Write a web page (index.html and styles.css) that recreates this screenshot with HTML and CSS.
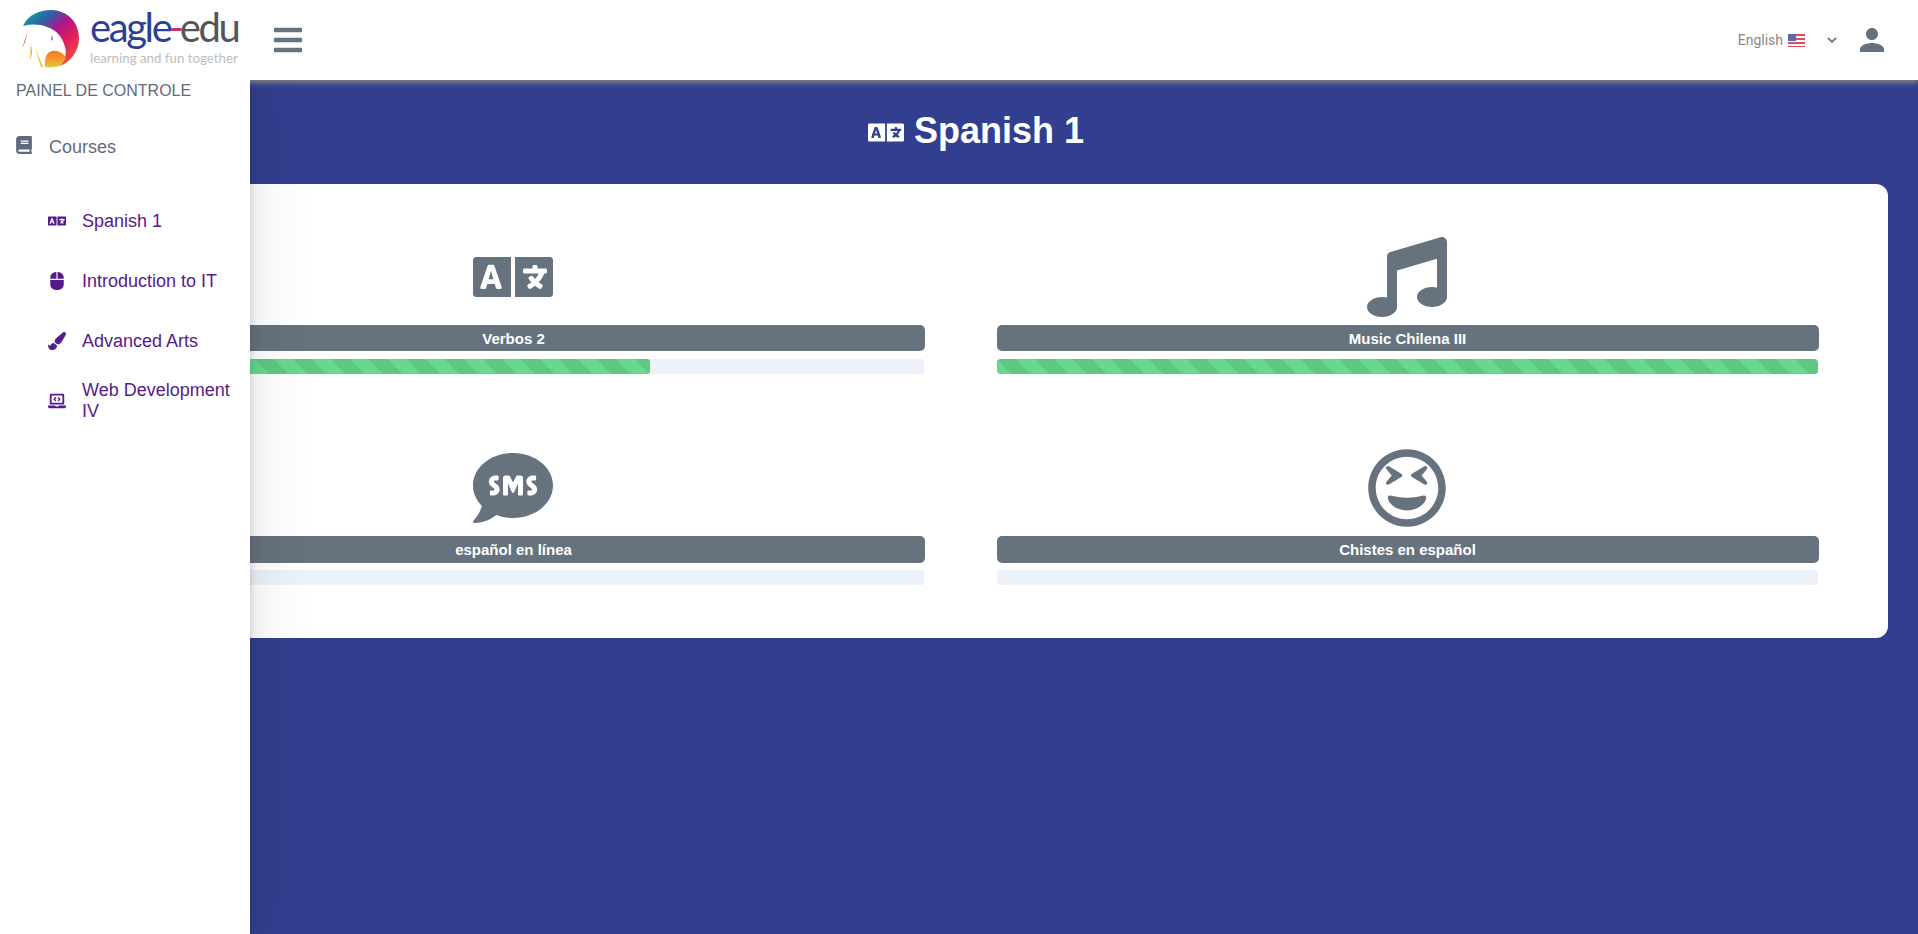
FILE: index.html
```html
<!DOCTYPE html>
<html lang="en">
  <head>
    <meta charset="UTF-8" />
    <title>Spanish 1</title>
    <link rel="stylesheet" href="styles.css">
  </head>
  <body>
    <header class="topbar">
      <div class="logo">
        <svg class="logo-mark" viewBox="20 8 64 64" width="64" height="64">
          <defs>
            <linearGradient id="rainbow" gradientUnits="userSpaceOnUse" x1="30" y1="14" x2="72" y2="62">
              <stop offset="0" stop-color="#0f9aa0" />
              <stop offset="0.22" stop-color="#2f5fa8" />
              <stop offset="0.45" stop-color="#b0158a" />
              <stop offset="0.7" stop-color="#e01f5c" />
              <stop offset="1" stop-color="#f0503a" />
            </linearGradient>
            <linearGradient id="hump" x1="0" y1="0" x2="0" y2="1">
              <stop offset="0" stop-color="#f5761f" />
              <stop offset="0.6" stop-color="#f7a030" />
              <stop offset="1" stop-color="#c9d24a" />
            </linearGradient>
          </defs>
          <path fill="url(#rainbow)" d="M23 26C28 15 39 10 51 10c16 0 28 12 28 28 0 14-9 24-19 28 5-6 7-12 5-19-3-11-9-17-18-20-8-3-16-3-24-1z" />
          <path fill="url(#hump)" d="M45 67c-1-7 1-15 7-16 6-1 12 3 14 7-2 4-4 6-6 8-5 1-10 2-15 1z" />
          <path fill="#e8402c" d="M28 30l-6 19 3-7z" />
          <path fill="#f5a020" d="M31 43l-1 17 2-7z" />
          <path fill="#e8c030" d="M35 47l8 20h-2z" />
          <path fill="#5566c0" d="M52 35l1 6-2-2z" />
        </svg>
        <div class="logo-text">
          <div class="logo-name"><span class="logo-blue">eagle</span><span class="logo-dash">-</span><span class="logo-grey">edu</span></div>
          <div class="logo-tag">learning and fun together</div>
        </div>
      </div>
      <svg class="menu-icon" viewBox="0 0 448 512" width="28" height="32">
        <path d="M16 132h416c8.837 0 16-7.163 16-16V76c0-8.837-7.163-16-16-16H16C7.163 60 0 67.163 0 76v40c0 8.837 7.163 16 16 16zm0 160h416c8.837 0 16-7.163 16-16v-40c0-8.837-7.163-16-16-16H16c-8.837 0-16 7.163-16 16v40c0 8.837 7.163 16 16 16zm0 160h416c8.837 0 16-7.163 16-16v-40c0-8.837-7.163-16-16-16H16c-8.837 0-16 7.163-16 16v40c0 8.837 7.163 16 16 16z" />
      </svg>
      <div class="lang">
        <span>English</span>
        <svg class="flag" viewBox="0 0 17 14" width="17" height="14">
          <rect width="17" height="14" fill="#f4f4f6" />
          <path fill="#d85060" d="M0 1h17v2H0zM0 5h17v2H0zM0 9h17v2H0zM0 13h17v1H0z" />
          <rect width="8" height="7" y="1" fill="#5a6aa8" />
        </svg>
        <svg class="chevron" viewBox="0 0 10 6" width="10" height="6">
          <path d="M1 1l4 4 4-4" />
        </svg>
      </div>
      <svg class="user-icon" viewBox="0 0 24 24" width="36" height="36">
        <path d="M12 12c2.21 0 4-1.79 4-4s-1.79-4-4-4-4 1.79-4 4 1.79 4 4 4zm0 2c-2.67 0-8 1.34-8 4v2h16v-2c0-2.66-5.33-4-8-4z" />
      </svg>
    </header>

    <aside class="sidebar">
      <div class="side-title">PAINEL DE CONTROLE</div>
      <div class="side-section">
        <svg viewBox="0 0 448 512" width="16" height="18">
          <path d="M448 360V24c0-13.3-10.7-24-24-24H96C43 0 0 43 0 96v320c0 53 43 96 96 96h328c13.3 0 24-10.7 24-24v-16c0-7.5-3.5-14.3-8.9-18.7-4.2-15.4-4.2-59.3 0-74.7 5.4-4.3 8.9-11.1 8.9-18.6zM128 134c0-3.3 2.7-6 6-6h212c3.3 0 6 2.7 6 6v20c0 3.3-2.7 6-6 6H134c-3.3 0-6-2.7-6-6v-20zm0 64c0-3.3 2.7-6 6-6h212c3.3 0 6 2.7 6 6v20c0 3.3-2.7 6-6 6H134c-3.3 0-6-2.7-6-6v-20zm253.4 250H96c-17.7 0-32-14.3-32-32 0-17.6 14.4-32 32-32h285.4c-1.9 17.1-1.9 46.9 0 64z" />
        </svg>
        <span>Courses</span>
      </div>
      <ul class="side-list">
        <li>
          <svg viewBox="0 0 640 512" width="18" height="18"><use href="#icon-language" /></svg>
          <span>Spanish 1</span>
        </li>
        <li>
          <svg viewBox="0 0 384 512" width="18" height="18">
            <path d="M0 352a160 160 0 0 0 160 160h64a160 160 0 0 0 160-160V224H0zM176 0h-16A160 160 0 0 0 0 160v32h176zm48 0h-16v192h176v-32A160 160 0 0 0 224 0z" />
          </svg>
          <span>Introduction to IT</span>
        </li>
        <li>
          <svg viewBox="0 0 512 512" width="18" height="18">
            <path d="M167.02 309.34c-40.12 2.58-76.53 17.86-97.19 72.3-2.35 6.21-8 9.98-14.59 9.98-11.11 0-45.46-27.67-55.25-34.35C0 439.62 37.93 512 128 512c75.86 0 128-43.77 128-120.19 0-3.11-.65-6.08-.97-9.13l-88.01-73.34zM457.89 0c-15.16 0-29.37 6.71-40.21 16.45C213.27 199.05 192 203.34 192 257.09c0 13.7 3.25 26.76 8.73 38.7l63.82 53.18c7.21 1.8 14.64 3.03 22.39 3.03 62.11 0 98.11-45.47 211.16-256.46 7.38-14.35 13.9-29.85 13.9-45.99C512 20.64 486 0 457.89 0z" />
          </svg>
          <span>Advanced Arts</span>
        </li>
        <li>
          <svg viewBox="0 0 640 512" width="18" height="18">
            <path d="M255.03 261.65c6.25 6.25 16.38 6.25 22.63 0l11.31-11.31c6.25-6.25 6.25-16.38 0-22.63L253.25 192l35.71-35.72c6.25-6.25 6.25-16.38 0-22.63l-11.31-11.31c-6.25-6.25-16.38-6.25-22.63 0l-58.34 58.34c-6.25 6.25-6.25 16.38 0 22.63l58.35 58.34zm96.01-11.3l11.31 11.31c6.25 6.25 16.38 6.25 22.63 0l58.34-58.34c6.25-6.25 6.25-16.38 0-22.63l-58.34-58.34c-6.25-6.25-16.38-6.25-22.63 0l-11.31 11.31c-6.25 6.25-6.25 16.38 0 22.63L386.75 192l-35.71 35.72c-6.25 6.25-6.25 16.38 0 22.63zM624 416H381.54c-.74 19.81-14.71 32-32.74 32H288c-18.69 0-33.02-17.47-32.77-32H16c-8.8 0-16 7.2-16 16v16c0 35.2 28.8 64 64 64h512c35.2 0 64-28.8 64-64v-16c0-8.8-7.2-16-16-16zM576 48c0-26.4-21.6-48-48-48H112C85.6 0 64 21.6 64 48v336h512V48zm-64 272H128V64h384v256z" />
          </svg>
          <span>Web Development IV</span>
        </li>
      </ul>
    </aside>

    <main class="content">
      <h1 class="page-title">
        <svg viewBox="0 0 640 512" width="36" height="29"><use href="#icon-language" /></svg>
        <span>Spanish 1</span>
      </h1>
      <section class="card">
        <div class="tile">
          <svg class="tile-icon" viewBox="0 0 640 512" width="80" height="80"><use href="#icon-language" /></svg>
          <div class="tile-name">Verbos 2</div>
          <div class="track"><div class="fill" style="width: 66.67%"></div></div>
        </div>
        <div class="tile">
          <svg class="tile-icon" viewBox="0 0 512 512" width="80" height="80">
            <path d="M470.38 1.51L150.41 96A32 32 0 0 0 128 126.51v261.41A139 139 0 0 0 96 384c-53 0-96 28.66-96 64s43 64 96 64 96-28.66 96-64V214.32l256-75v184.61a138.4 138.4 0 0 0-32-3.93c-53 0-96 28.66-96 64s43 64 96 64 96-28.65 96-64V32a32 32 0 0 0-41.62-30.49z" />
          </svg>
          <div class="tile-name">Music Chilena III</div>
          <div class="track"><div class="fill" style="width: 100%"></div></div>
        </div>
        <div class="tile">
          <svg class="tile-icon" viewBox="0 0 512 512" width="80" height="80">
            <path d="M256 32C114.6 32 0 125.1 0 240c0 49.6 21.4 95 57 130.7C44.5 421.1 2.7 466 2.2 466.5c-2.2 2.3-2.8 5.7-1.5 8.7 1.3 3 4.1 4.8 7.3 4.8 66.3 0 116-31.8 140.6-51.4 32.7 12.3 69 19.4 107.4 19.4 141.4 0 256-93.1 256-208S397.4 32 256 32zM128.2 304H116c-4.4 0-8-3.6-8-8v-16c0-4.4 3.6-8 8-8h12.3c6 0 10.4-3.5 10.4-6.6 0-1.3-.8-2.7-2.1-3.8l-21.9-18.8c-8.5-7.2-13.3-17.5-13.3-28.1 0-21.3 19-38.6 42.4-38.6H156c4.4 0 8 3.6 8 8v16c0 4.4-3.6 8-8 8h-12.3c-6 0-10.4 3.5-10.4 6.6 0 1.3.8 2.7 2.1 3.8l21.9 18.8c8.5 7.2 13.3 17.5 13.3 28.1.1 21.3-19 38.6-42.4 38.6zm191.8-8c0 4.4-3.6 8-8 8h-16c-4.4 0-8-3.6-8-8v-68.2l-24.8 55.8c-2.9 5.9-11.4 5.9-14.3 0L224 227.8V296c0 4.4-3.6 8-8 8h-16c-4.4 0-8-3.6-8-8V192c0-8.8 7.2-16 16-16h16c6.1 0 11.6 3.4 14.3 8.8l17.7 35.4 17.7-35.4c2.7-5.4 8.3-8.8 14.3-8.8h16c8.8 0 16 7.2 16 16v104zm48.3 8H356c-4.4 0-8-3.6-8-8v-16c0-4.4 3.6-8 8-8h12.3c6 0 10.4-3.5 10.4-6.6 0-1.3-.8-2.7-2.1-3.8l-21.9-18.8c-8.5-7.2-13.3-17.5-13.3-28.1 0-21.3 19-38.6 42.4-38.6H396c4.4 0 8 3.6 8 8v16c0 4.4-3.6 8-8 8h-12.3c-6 0-10.4 3.5-10.4 6.6 0 1.3.8 2.7 2.1 3.8l21.9 18.8c8.5 7.2 13.3 17.5 13.3 28.1.1 21.3-18.9 38.6-42.3 38.6z" />
          </svg>
          <div class="tile-name">español en línea</div>
          <div class="track"></div>
        </div>
        <div class="tile">
          <svg class="tile-icon" viewBox="0 0 496 512" width="80" height="80">
            <path d="M248 8C111 8 0 119 0 256s111 248 248 248 248-111 248-248S385 8 248 8zm0 448c-110.3 0-200-89.7-200-200S137.7 56 248 56s200 89.7 200 200-89.7 200-200 200zm105.6-151.4c-25.9 8.3-64.4 13.1-105.6 13.1s-79.6-4.8-105.6-13.1c-9.9-3.1-19.4 5.3-17.7 15.3 7.9 47.2 71.3 80 123.3 80s115.3-32.9 123.3-80c1.6-9.9-7.7-18.5-17.7-15.3zm-235.9-72.9c3.5 4.2 9.5 5 14.1 2.2l80-48c3.6-2.2 5.8-6.1 5.8-10.3s-2.2-8.1-5.8-10.3l-80-48c-5-3-11.4-1.9-15.2 2.6-3.8 4.5-3.8 11-.1 15.5l33.6 40.3-33.6 40.3c-3.8 4.5-3.7 11.1.2 15.7zm242.9 2.2c4.6 2.8 10.6 2 14.1-2.2 3.9-4.6 3.9-11.2.2-15.7l-33.6-40.3 33.6-40.3c3.8-4.5 3.7-11-.1-15.5-3.8-4.5-10.2-5.6-15.2-2.6l-80 48c-3.6 2.2-5.8 6.1-5.8 10.3s2.2 8.1 5.8 10.3l80 48z" />
          </svg>
          <div class="tile-name">Chistes en español</div>
          <div class="track"></div>
        </div>
      </section>
    </main>

    <svg class="icon-defs" width="0" height="0">
      <symbol id="icon-language" viewBox="0 0 640 512">
        <path d="M152.1 236.2c-3.5-12.1-7.8-33.2-7.8-33.2h-.5s-4.3 21.1-7.8 33.2l-11.1 37.5H163zM616 96H336v320h280c13.3 0 24-10.7 24-24V120c0-13.3-10.7-24-24-24zm-24 120c0 6.6-5.4 12-12 12h-11.4c-6.9 23.6-21.7 47.4-42.7 69.9 8.4 6.4 17.1 12.5 26.1 18 5.5 3.4 7.3 10.5 4.1 16.2l-7.9 13.9c-3.4 5.9-10.9 7.8-16.7 4.3-12.6-7.8-24.5-16.1-35.4-24.9-10.9 8.7-22.7 17.1-35.4 24.9-5.8 3.5-13.3 1.6-16.7-4.3l-7.9-13.9c-3.2-5.6-1.4-12.8 4.2-16.2 9.3-5.7 18-11.7 26.1-18-7.9-8.4-14.9-17-21-25.7-4-5.7-2.2-13.6 3.7-17.1l6.5-3.9 7.3-4.3c5.4-3.2 12.4-1.7 16 3.4 5 7 10.8 14 17.4 20.9 13.5-14.2 23.8-28.9 30-43.2H412c-6.6 0-12-5.4-12-12v-16c0-6.6 5.4-12 12-12h64v-16c0-6.6 5.4-12 12-12h16c6.6 0 12 5.4 12 12v16h64c6.6 0 12 5.4 12 12zM0 120v272c0 13.3 10.7 24 24 24h280V96H24c-13.3 0-24 10.7-24 24zm58.9 216.1L116.4 167c1.7-4.9 6.2-8.1 11.4-8.1h32.5c5.1 0 9.7 3.3 11.4 8.1l57.5 169.1c2.6 7.8-3.1 15.9-11.4 15.9h-22.9a12 12 0 0 1-11.5-8.6l-9.4-31.9h-60.2l-9.1 31.8c-1.5 5.1-6.2 8.7-11.5 8.7H70.3c-8.2 0-14-8.1-11.4-15.9z" />
      </symbol>
    </svg>
  </body>
</html>
```

FILE: styles.css
```css
* {
  box-sizing: border-box;
}

body {
  font-family: "Liberation Sans", Arial, sans-serif;
  background: #323f8f;
  margin: 0;
  height: 934px;
  overflow: hidden;
  display: flex;
  flex-direction: column;
}

.topbar {
  position: relative;
  z-index: 1;
  height: 80px;
  flex: none;
  background: #fff;
  display: flex;
  align-items: center;
  padding: 0 28px 0 20px;
  box-shadow: 0 3px 5px #828282;
}

.logo {
  display: flex;
  align-items: center;
  width: 254px;
  flex: none;
}

.logo-mark {
  flex: none;
}

.logo-text {
  margin-left: 6px;
  margin-top: -6px;
  font-family: Lato, sans-serif;
  white-space: nowrap;
}

.logo-name {
  font-size: 40px;
  line-height: 38px;
  letter-spacing: -2.4px;
}

.logo-blue {
  color: #2b3f96;
}

.logo-dash {
  color: #c4306e;
  margin: 0 -1.5px;
}

.logo-grey {
  color: #555;
}

.logo-tag {
  font-size: 13.3px;
  line-height: 16px;
  color: #bdbdbd;
  margin-top: 4px;
}

.menu-icon {
  fill: #67727f;
  flex: none;
}

.lang {
  margin-left: auto;
  display: flex;
  align-items: center;
  font-family: Roboto, sans-serif;
  font-size: 14px;
  color: #888;
}

.flag {
  margin-left: 5px;
}

.chevron {
  margin-left: 22px;
  fill: none;
  stroke: #777;
  stroke-width: 1.8;
}

.user-icon {
  fill: #64707f;
  margin-left: 17px;
  flex: none;
}

.sidebar {
  position: absolute;
  z-index: 2;
  top: 80px;
  bottom: 0;
  left: 0;
  width: 250px;
  background: #fff;
  padding-top: 1px;
  box-shadow: 0 0 8px rgba(0, 0, 0, 0.18), 0 0 60px rgba(0, 0, 0, 0.12);
  clip-path: inset(0 -100px 0 0);
}

.side-title {
  padding-left: 16px;
  font-size: 16px;
  line-height: 20px;
  color: #5f6b7c;
}

.side-section {
  display: flex;
  align-items: center;
  margin-top: 36px;
  padding-left: 16px;
  font-size: 18px;
  line-height: 20px;
  color: #5f6b7c;
}

.side-section svg {
  fill: #5f6b7c;
  margin: -4px 17px 0 0;
}

.side-list {
  list-style: none;
  margin: 34px 0 0;
  padding: 0;
}

.side-list li {
  height: 60px;
  display: flex;
  align-items: center;
  padding: 0 16px 0 48px;
  font-size: 18px;
  line-height: 21px;
  color: #551a8b;
}

.side-list svg {
  fill: #551a8b;
  flex: none;
  margin-right: 16px;
}

.content {
  flex: 1;
  padding: 0 30px;
}

.page-title {
  height: 104px;
  margin: 0;
  padding-left: 34px;
  display: flex;
  align-items: center;
  justify-content: center;
  gap: 10px;
  color: #fff;
  font-size: 36px;
  font-weight: bold;
}

.page-title svg {
  fill: #fff;
}

.page-title span {
  margin-top: -2px;
}

.card {
  background: #fff;
  border-radius: 12px;
  padding: 52.6px 70px 52.5px 73px;
  display: grid;
  grid-template-columns: 821px 821px;
  column-gap: 73px;
  row-gap: 74.1px;
}

.tile-icon {
  display: block;
  margin: 0 0 8px 370px;
  fill: #67727f;
}

.tile-name {
  height: 26.6px;
  line-height: 27px;
  margin: 0 -1px 7.8px 0;
  padding-right: 1px;
  background: #67727f;
  border-radius: 5px;
  color: #fff;
  font-size: 15px;
  font-weight: bold;
  text-align: center;
}

.track {
  height: 15px;
  background: #edf1f8;
  border-radius: 3px;
  overflow: hidden;
}

.fill {
  height: 100%;
  border-radius: 3px;
  background-color: #66d98e;
  background-image: linear-gradient(45deg, rgba(0, 0, 0, 0.08) 25%, transparent 25%, transparent 50%, rgba(0, 0, 0, 0.08) 50%, rgba(0, 0, 0, 0.08) 75%, transparent 75%);
  background-size: 38px 38px;
}

.icon-defs {
  position: absolute;
}
```
